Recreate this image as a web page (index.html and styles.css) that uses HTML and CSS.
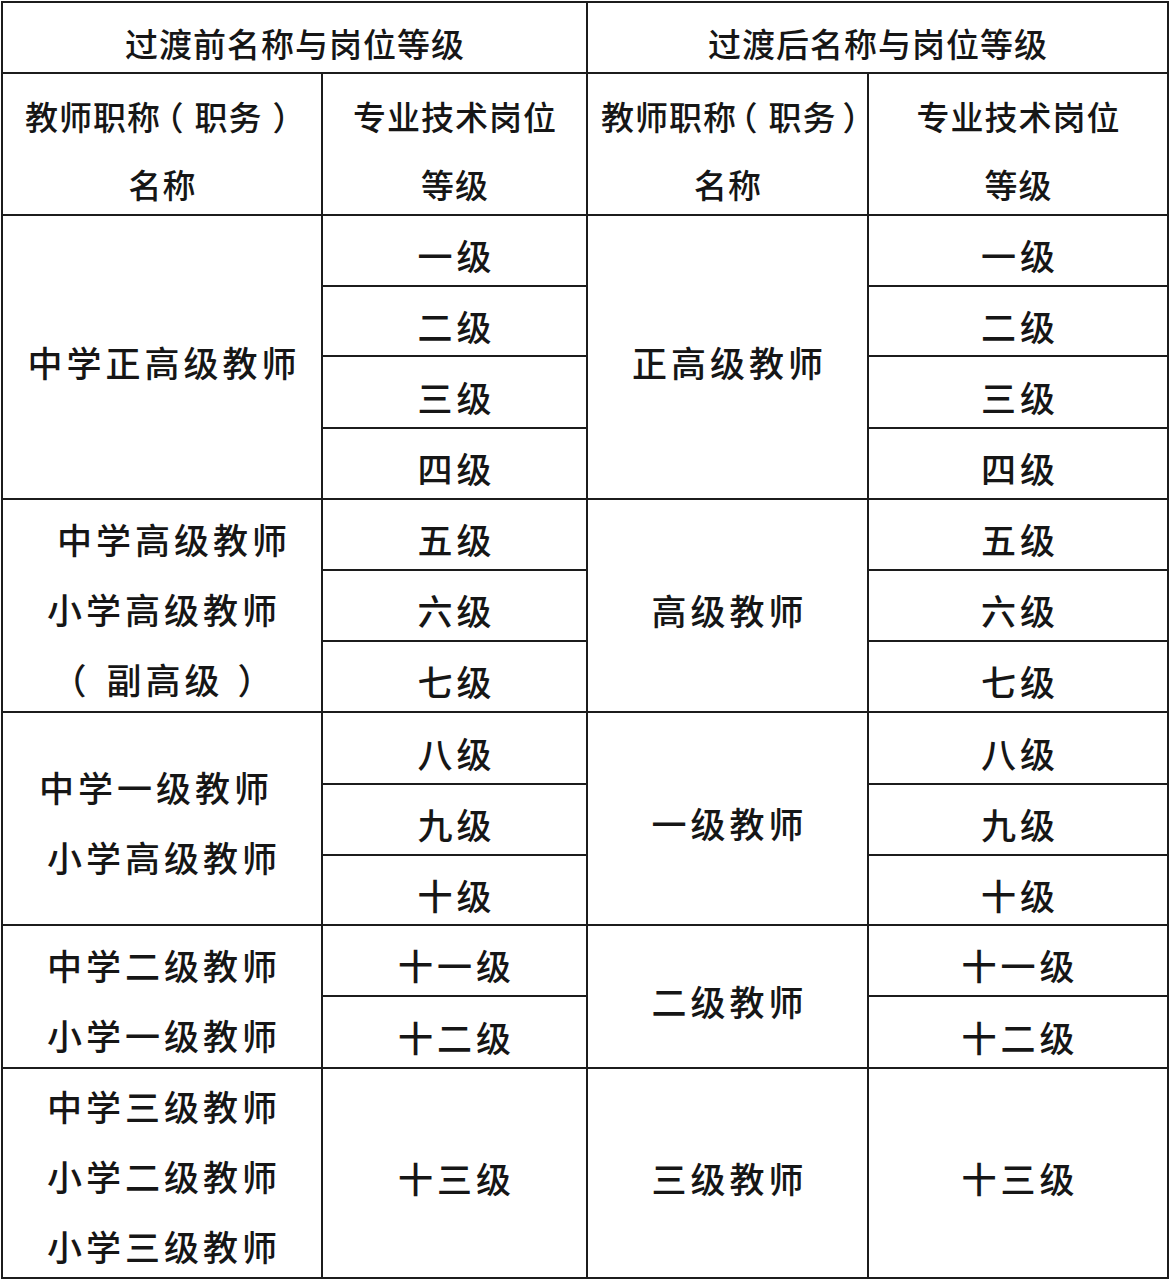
FILE: index.html
```html
<!DOCTYPE html>
<html lang="zh-CN">
<head>
<meta charset="utf-8">
<title>过渡前后名称与岗位等级</title>
<link rel="stylesheet" href="styles.css">
</head>
<body>
<div class="sheet">
  <div class="cell hd span-c2 c1">过渡前名称与岗位等级</div>
  <div class="cell hd span-c2 c3">过渡后名称与岗位等级</div>

  <div class="cell hd2 c1"><span class="ln left">教师职称<span class="pl">（</span>职务<span class="pr">）</span></span><span class="ln">名称</span></div>
  <div class="cell hd2 c2"><span class="ln">专业技术岗位</span><span class="ln">等级</span></div>
  <div class="cell hd2 c3"><span class="ln right">教师职称<span class="pl-t">（</span>职务<span class="pr-t">）</span></span><span class="ln">名称</span></div>
  <div class="cell hd2 c4"><span class="ln">专业技术岗位</span><span class="ln">等级</span></div>

  <div class="cell bd c1 r4">中学正高级教师</div>
  <div class="cell bd c2">一级</div>
  <div class="cell bd c3 r4">正高级教师</div>
  <div class="cell bd c4">一级</div>
  <div class="cell bd c2">二级</div>
  <div class="cell bd c4">二级</div>
  <div class="cell bd c2">三级</div>
  <div class="cell bd c4">三级</div>
  <div class="cell bd c2">四级</div>
  <div class="cell bd c4">四级</div>

  <div class="cell bd multi c1 r3"><span class="ln lead">中学高级教师</span><span class="ln">小学高级教师</span><span class="ln"><span class="pl2">（</span>副高级<span class="pr2">）</span></span></div>
  <div class="cell bd c2">五级</div>
  <div class="cell bd c3 r3">高级教师</div>
  <div class="cell bd c4">五级</div>
  <div class="cell bd c2">六级</div>
  <div class="cell bd c4">六级</div>
  <div class="cell bd c2">七级</div>
  <div class="cell bd c4">七级</div>

  <div class="cell bd multi c1 r3"><span class="ln back">中学一级教师</span><span class="ln">小学高级教师</span></div>
  <div class="cell bd c2">八级</div>
  <div class="cell bd c3 r3">一级教师</div>
  <div class="cell bd c4">八级</div>
  <div class="cell bd c2">九级</div>
  <div class="cell bd c4">九级</div>
  <div class="cell bd c2">十级</div>
  <div class="cell bd c4">十级</div>

  <div class="cell bd multi c1 r2"><span class="ln">中学二级教师</span><span class="ln">小学一级教师</span></div>
  <div class="cell bd c2">十一级</div>
  <div class="cell bd c3 r2">二级教师</div>
  <div class="cell bd c4">十一级</div>
  <div class="cell bd c2">十二级</div>
  <div class="cell bd c4">十二级</div>

  <div class="cell bd multi c1 r3"><span class="ln">中学三级教师</span><span class="ln">小学二级教师</span><span class="ln">小学三级教师</span></div>
  <div class="cell bd c2 r3">十三级</div>
  <div class="cell bd c3 r3">三级教师</div>
  <div class="cell bd c4 r3">十三级</div>
</div>
</body>
</html>
```

FILE: styles.css
```css
html, body {
  margin: 0;
  padding: 0;
  background: #ffffff;
}

.sheet {
  display: grid;
  grid-template-columns: 318px 263px 279px 298px;
  grid-template-rows: 69px 140px 69px 68px 70px 69px 69px 69px 69px 70px 69px 68px 69px 70px 68px 68px 68px;
  gap: 2px;
  padding: 2px;
  width: max-content;
  margin: 1px 0 0 1px;
  background: #1c1c1c;
  font-family: "Noto Sans CJK SC", "Noto Sans", sans-serif;
  font-weight: 500;
  color: #161616;
}

.cell {
  background: #ffffff;
  display: flex;
  flex-direction: column;
  align-items: center;
  justify-content: center;
  white-space: nowrap;
  text-align: center;
}

.c1 { grid-column: 1; }
.c2 { grid-column: 2; }
.c3 { grid-column: 3; }
.c4 { grid-column: 4; }
.span-c2.c1 { grid-column: 1 / span 2; }
.span-c2.c3 { grid-column: 3 / span 2; }
.r2 { grid-row: span 2; }
.r3 { grid-row: span 3; }
.r4 { grid-row: span 4; }

.hd {
  font-size: 33px;
  letter-spacing: 1px;
  padding-left: 1px;
  line-height: 1;
  padding-top: 12px;
}

.hd2 {
  font-size: 33px;
  letter-spacing: 1px;
  line-height: 68px;
  padding-top: 12px;
}

.hd2 .ln {
  display: block;
  padding-left: 1px;
}

.hd2 .left {
  padding-right: 10px;
}

.hd2 .right {
  padding-left: 6px;
}

.bd {
  font-size: 35px;
  letter-spacing: 4px;
  padding-left: 4px;
  line-height: 1;
  padding-top: 8px;
}

.bd.multi {
  line-height: 70px;
  padding-top: 6px;
}

.bd.multi .ln {
  display: block;
}

.lead {
  padding-left: 20px;
}

.back {
  padding-right: 16px;
}

.pl, .pr, .pl-t, .pr-t, .pl2, .pr2 {
  font-feature-settings: "halt" 1;
}

.pl {
  margin-left: 6px;
  margin-right: 10px;
}

.pr {
  margin-left: 10px;
}

.pl-t {
  margin-left: 4px;
  margin-right: 10px;
}

.pr-t {
  margin-left: 6px;
}

.pl2 {
  margin-right: 16px;
}

.pr2 {
  margin-left: 14px;
}
```
